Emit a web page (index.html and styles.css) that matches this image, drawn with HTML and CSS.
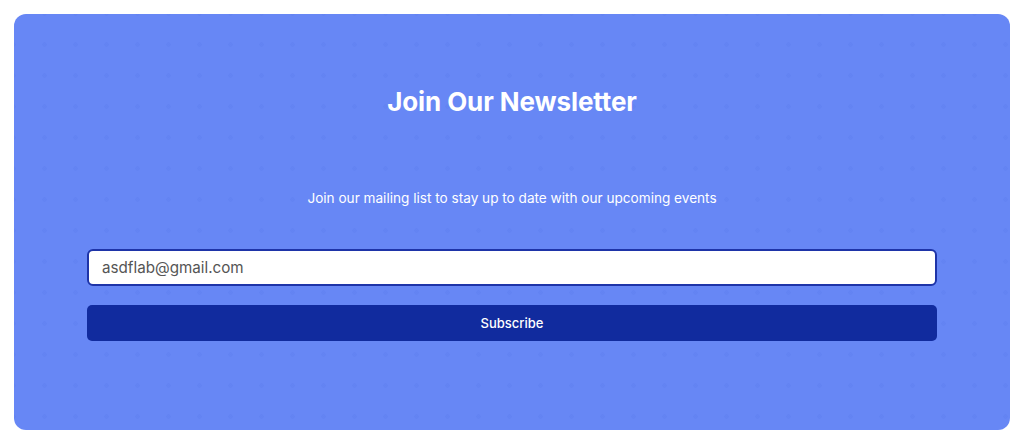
FILE: index.html
```html
<!DOCTYPE html>
<html lang="en">
<head>
<meta charset="utf-8">
<title>Newsletter</title>
<link rel="stylesheet" href="styles.css">
</head>
<body>
<section class="card">
  <h1 class="title">Join Our Newsletter</h1>
  <p class="subtitle">Join our mailing list to stay up to date with our upcoming events</p>
  <form class="form">
    <input class="email" type="email" value="asdflab@gmail.com">
    <button class="submit" type="button">Subscribe</button>
  </form>
</section>
</body>
</html>
```
FILE: styles.css
```css
* { box-sizing: border-box; }
html, body { margin: 0; background: #ffffff; }
body {
  padding: 14px 14px 15px 14px;
  font-family: Inter, "Noto Sans", sans-serif;
}
.card {
  width: 996px;
  height: 416px;
  border-radius: 12px;
  background-color: #6787f5;
  background-image: radial-gradient(circle, rgba(80, 110, 230, 0.14) 2px, transparent 2.5px);
  background-size: 31px 31px;
  background-position: 15px 15px;
  padding: 0 73px;
  display: flex;
  flex-direction: column;
  align-items: stretch;
}
.title {
  margin: 74px 0 0 0;
  text-align: center;
  color: #ffffff;
  font-size: 26px;
  line-height: 28px;
  font-weight: 700;
  letter-spacing: -0.1px;
}
.subtitle {
  margin: 72px 0 0 0;
  text-align: center;
  color: #ffffff;
  font-size: 13.6px;
  line-height: 20px;
}
.form {
  margin-top: 41px;
  display: flex;
  flex-direction: column;
  gap: 19px;
}
.email {
  height: 37px;
  width: 100%;
  border: 2px solid #1e34a8;
  border-radius: 6px;
  background: #ffffff;
  padding: 0 13px;
  font-family: inherit;
  font-size: 15.2px;
  color: #555555;
  outline: none;
}
.submit {
  height: 36px;
  width: 100%;
  border: none;
  border-radius: 5px;
  background: #112b9e;
  color: #ffffff;
  font-family: inherit;
  font-size: 13px;
  font-weight: 500;
}
```
